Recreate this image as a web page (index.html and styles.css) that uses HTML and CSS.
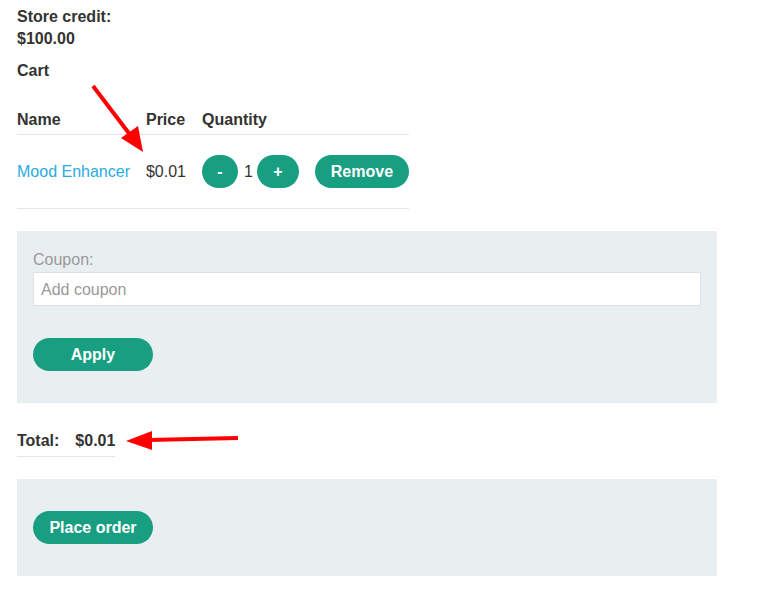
FILE: index.html
```html
<!DOCTYPE html>
<html>
<head>
<meta charset="utf-8">
<link rel="stylesheet" href="styles.css">
</head>
<body>
<div class="page">
  <p class="credit">Store credit:<br>$100.00</p>
  <p class="cart-title">Cart</p>
  <table class="cart">
    <thead>
      <tr><th>Name</th><th>Price</th><th>Quantity</th><th></th></tr>
    </thead>
    <tbody>
      <tr>
        <td><a href="#" class="link">Mood Enhancer</a></td>
        <td>$0.01</td>
        <td><div class="qty"><button class="btn round minus">-</button><span>1</span><button class="btn round plus">+</button></div></td>
        <td class="last"><button class="btn remove">Remove</button></td>
      </tr>
    </tbody>
  </table>
  <form class="panel coupon">
    <label class="coupon-label">Coupon:</label>
    <input class="coupon-input" type="text" placeholder="Add coupon">
    <button class="btn wide" type="button">Apply</button>
  </form>
  <table class="total">
    <tr><th>Total:</th><th class="last">$0.01</th></tr>
  </table>
  <div class="panel order">
    <button class="btn wide">Place order</button>
  </div>
</div>
<svg class="arrows" width="764" height="597" viewBox="0 0 764 597">
  <line x1="93" y1="86" x2="131" y2="136" stroke="#ff0000" stroke-width="4"/>
  <polygon points="143,152 121,138 138,126" fill="#ff0000"/>
  <line x1="238" y1="438" x2="148" y2="440" stroke="#ff0000" stroke-width="4"/>
  <polygon points="126,441 152,431 152,450" fill="#ff0000"/>
</svg>
</body>
</html>
```
FILE: styles.css
```css
html, body {
  margin: 0;
  padding: 0;
  background: #fff;
}
body {
  font-family: "Liberation Sans", Arial, sans-serif;
  font-size: 16px;
  line-height: 22px;
  color: #333332;
  position: relative;
}
.page {
  padding: 6px 17px 20px 17px;
  width: 700px;
}
.credit {
  margin: 0;
  font-weight: bold;
}
.cart-title {
  margin: 10px 0 27px 0;
  font-weight: bold;
}
table {
  border-collapse: collapse;
}
th {
  text-align: left;
  font-weight: bold;
  padding: 0 16px 3px 0;
  border-bottom: 1px solid #e6e6e6;
}
td {
  padding: 20px 16px 20px 0;
  border-bottom: 1px solid #e6e6e6;
  vertical-align: middle;
  white-space: nowrap;
}
.cart td.last, .cart th:last-child { padding-right: 0; }
.link {
  color: #29abe0;
  text-decoration: none;
}
.btn {
  font-family: "Liberation Sans", Arial, sans-serif;
  font-weight: bold;
  font-size: 16px;
  color: #fff;
  background: #189e80;
  border: none;
  border-radius: 20px;
  height: 33px;
  padding: 0;
  cursor: pointer;
  line-height: 33px;
}
.qty {
  display: flex;
  align-items: center;
  gap: 6px;
}
.qty span { margin-left: 0; margin-right: -2px; }
.minus { width: 36px; }
.plus { width: 42px; }
.remove { width: 94px; }
.panel {
  background: #e9eef1;
  padding: 32px 16px;
}
.coupon {
  margin-top: 22px;
  padding-top: 18px;
  display: flex;
  flex-direction: column;
  align-items: flex-start;
}
.coupon-label {
  color: #999;
  line-height: 22px;
}
.coupon-input {
  box-sizing: border-box;
  width: 668px;
  height: 34px;
  margin: 1px 0 32px 0;
  border: 1px solid #e0e0e0;
  background: #fff;
  padding: 1px 7px 0 7px;
  font-family: "Liberation Sans", Arial, sans-serif;
  font-size: 16px;
  color: #333;
}
.coupon-input::placeholder { color: #999; }
.wide { width: 120px; }
.total {
  margin-top: 27px;
}
.total th { padding-bottom: 4px; }
.total th.last { padding-right: 0; }
.order {
  margin-top: 22px;
  display: flex;
}
.arrows {
  position: absolute;
  left: 0;
  top: 0;
  pointer-events: none;
}
```
